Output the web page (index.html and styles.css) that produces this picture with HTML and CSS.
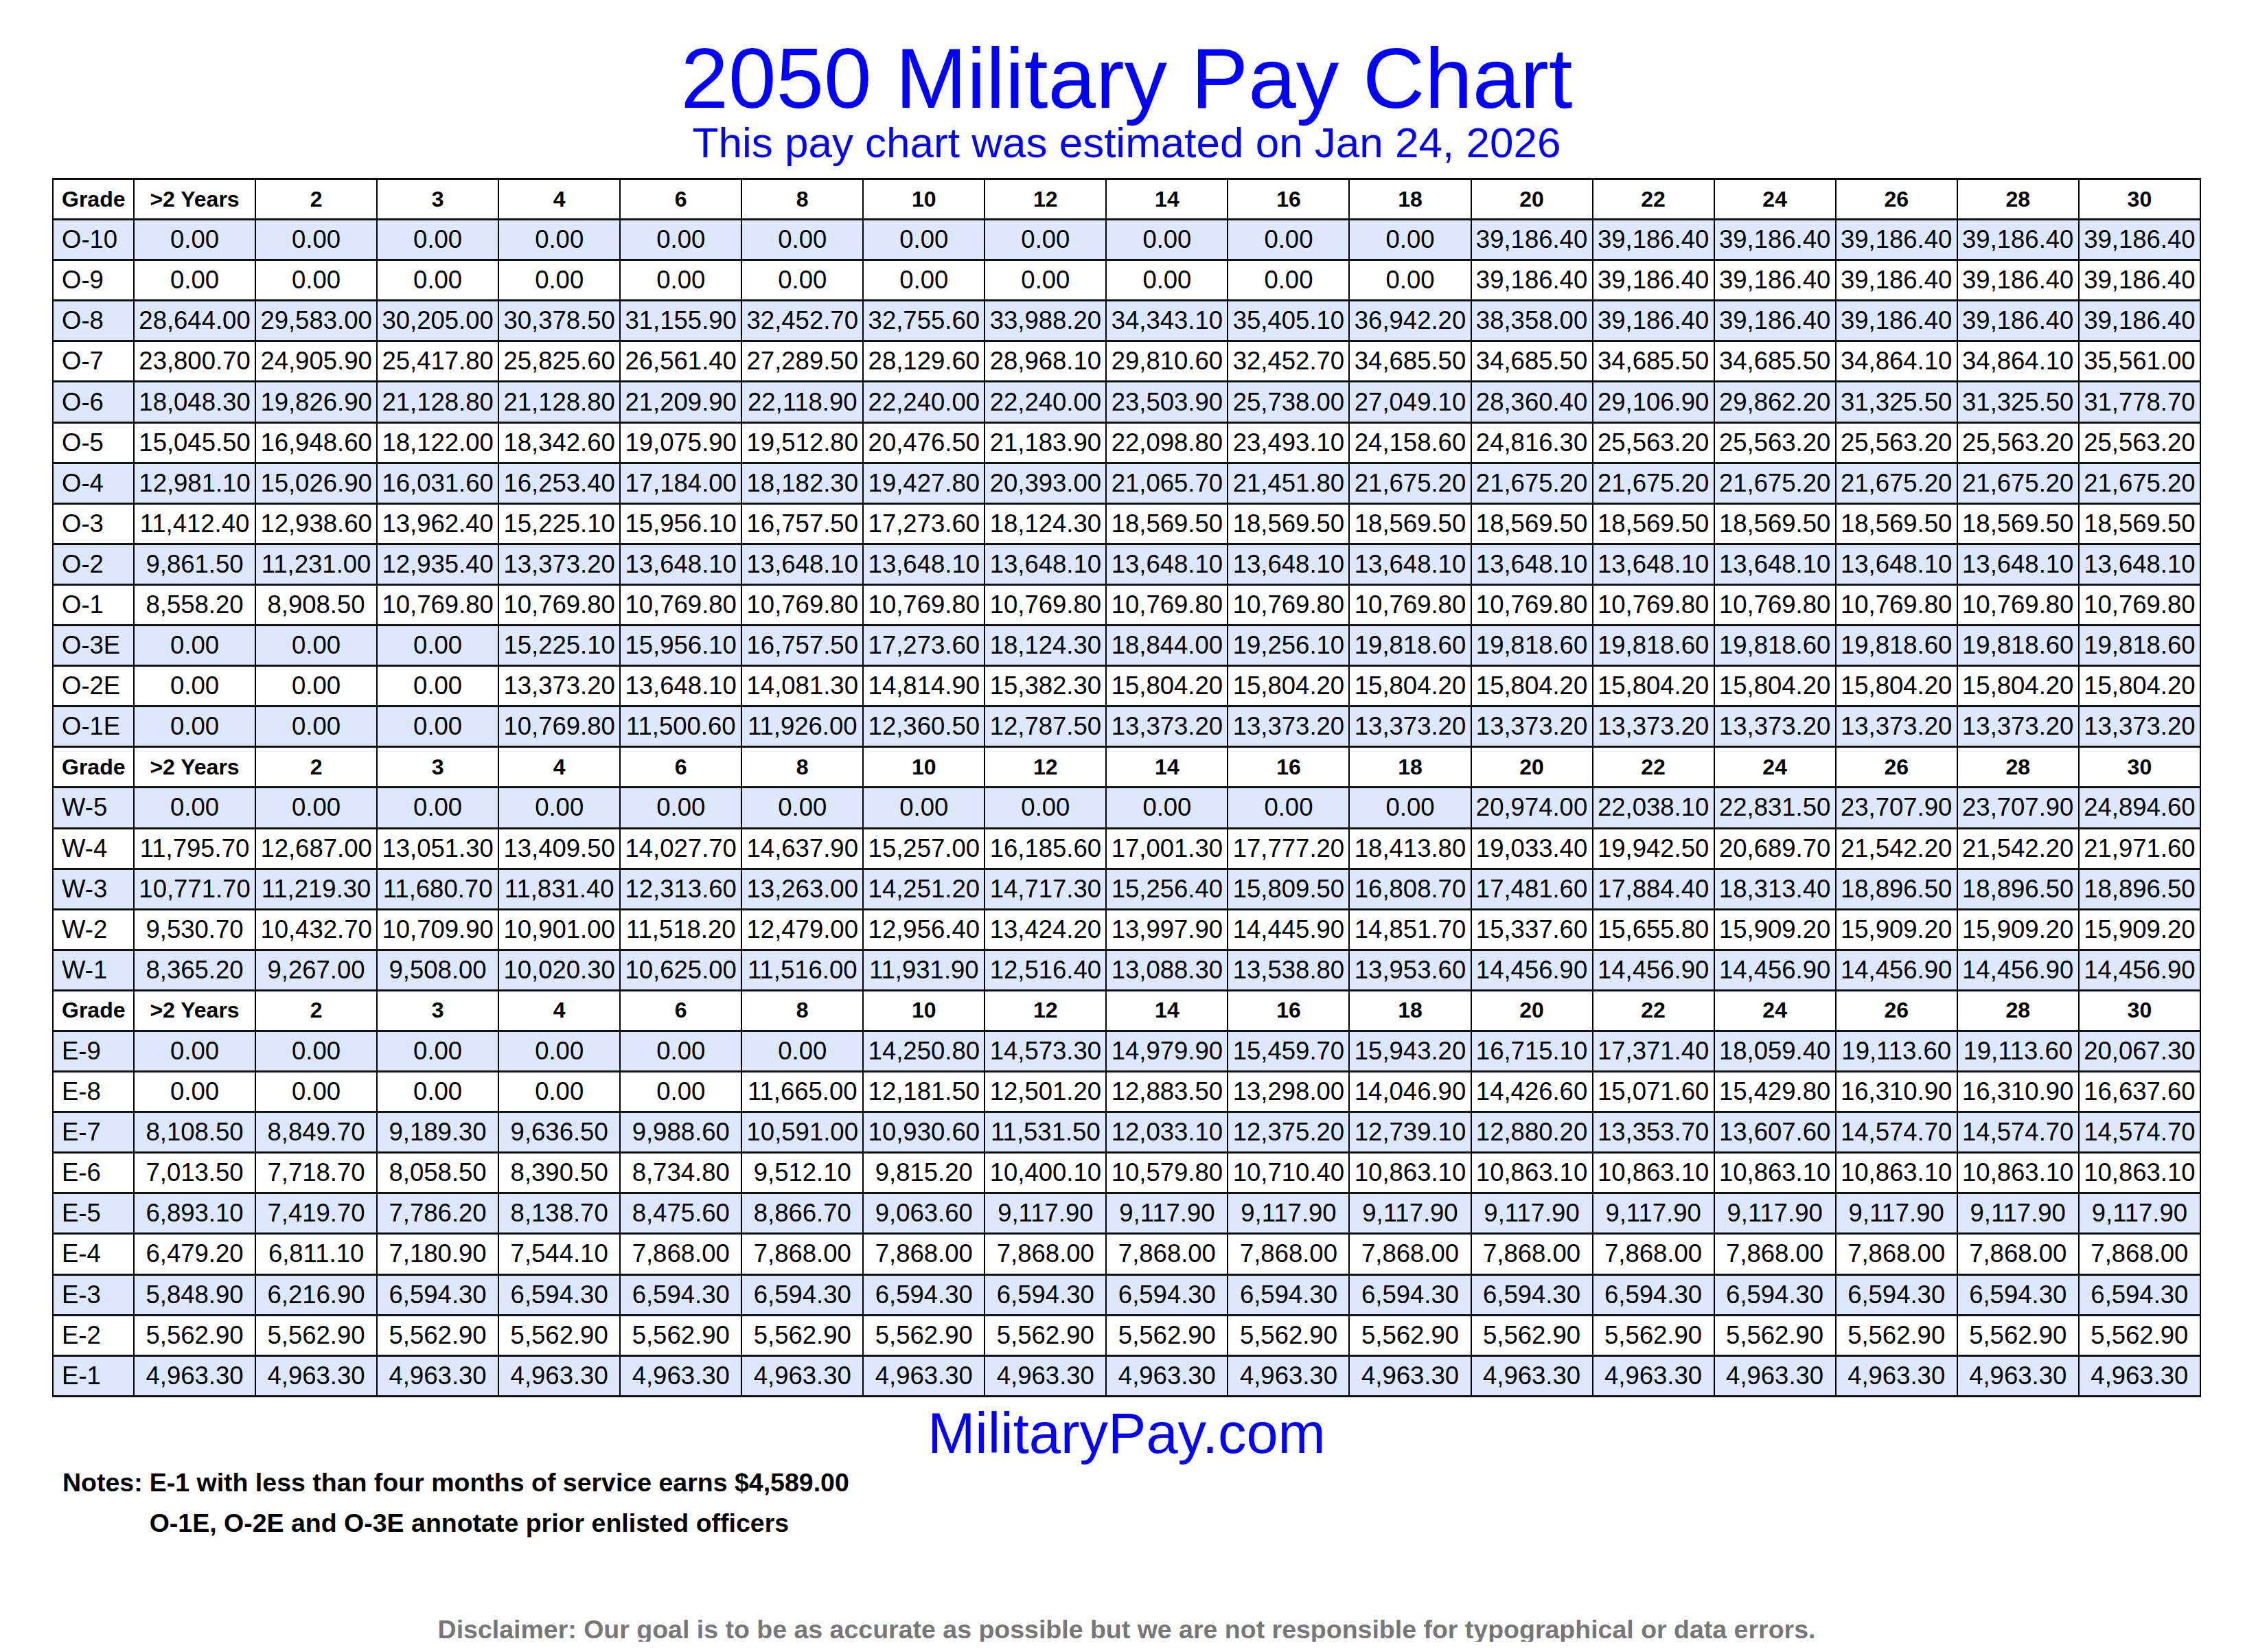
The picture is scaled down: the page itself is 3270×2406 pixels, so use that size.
FILE: index.html
```html
<!DOCTYPE html>
<html lang="en">
<head>
<meta charset="utf-8">
<title>2050 Military Pay Chart</title>
<link rel="stylesheet" href="styles.css">
</head>
<body>
<div class="page">
  <h1 class="title">2050 Military Pay Chart</h1>
  <p class="subtitle">This pay chart was estimated on Jan 24, 2026</p>
  <table class="pay">
    <colgroup><col class="c-grade"><col span="17"></colgroup>
    <tbody>
      <tr class="head"><th>Grade</th><th>&gt;2 Years</th><th>2</th><th>3</th><th>4</th><th>6</th><th>8</th><th>10</th><th>12</th><th>14</th><th>16</th><th>18</th><th>20</th><th>22</th><th>24</th><th>26</th><th>28</th><th>30</th></tr>
      <tr class="alt"><td>O-10</td><td>0.00</td><td>0.00</td><td>0.00</td><td>0.00</td><td>0.00</td><td>0.00</td><td>0.00</td><td>0.00</td><td>0.00</td><td>0.00</td><td>0.00</td><td>39,186.40</td><td>39,186.40</td><td>39,186.40</td><td>39,186.40</td><td>39,186.40</td><td>39,186.40</td></tr>
      <tr><td>O-9</td><td>0.00</td><td>0.00</td><td>0.00</td><td>0.00</td><td>0.00</td><td>0.00</td><td>0.00</td><td>0.00</td><td>0.00</td><td>0.00</td><td>0.00</td><td>39,186.40</td><td>39,186.40</td><td>39,186.40</td><td>39,186.40</td><td>39,186.40</td><td>39,186.40</td></tr>
      <tr class="alt"><td>O-8</td><td>28,644.00</td><td>29,583.00</td><td>30,205.00</td><td>30,378.50</td><td>31,155.90</td><td>32,452.70</td><td>32,755.60</td><td>33,988.20</td><td>34,343.10</td><td>35,405.10</td><td>36,942.20</td><td>38,358.00</td><td>39,186.40</td><td>39,186.40</td><td>39,186.40</td><td>39,186.40</td><td>39,186.40</td></tr>
      <tr><td>O-7</td><td>23,800.70</td><td>24,905.90</td><td>25,417.80</td><td>25,825.60</td><td>26,561.40</td><td>27,289.50</td><td>28,129.60</td><td>28,968.10</td><td>29,810.60</td><td>32,452.70</td><td>34,685.50</td><td>34,685.50</td><td>34,685.50</td><td>34,685.50</td><td>34,864.10</td><td>34,864.10</td><td>35,561.00</td></tr>
      <tr class="alt"><td>O-6</td><td>18,048.30</td><td>19,826.90</td><td>21,128.80</td><td>21,128.80</td><td>21,209.90</td><td>22,118.90</td><td>22,240.00</td><td>22,240.00</td><td>23,503.90</td><td>25,738.00</td><td>27,049.10</td><td>28,360.40</td><td>29,106.90</td><td>29,862.20</td><td>31,325.50</td><td>31,325.50</td><td>31,778.70</td></tr>
      <tr><td>O-5</td><td>15,045.50</td><td>16,948.60</td><td>18,122.00</td><td>18,342.60</td><td>19,075.90</td><td>19,512.80</td><td>20,476.50</td><td>21,183.90</td><td>22,098.80</td><td>23,493.10</td><td>24,158.60</td><td>24,816.30</td><td>25,563.20</td><td>25,563.20</td><td>25,563.20</td><td>25,563.20</td><td>25,563.20</td></tr>
      <tr class="alt"><td>O-4</td><td>12,981.10</td><td>15,026.90</td><td>16,031.60</td><td>16,253.40</td><td>17,184.00</td><td>18,182.30</td><td>19,427.80</td><td>20,393.00</td><td>21,065.70</td><td>21,451.80</td><td>21,675.20</td><td>21,675.20</td><td>21,675.20</td><td>21,675.20</td><td>21,675.20</td><td>21,675.20</td><td>21,675.20</td></tr>
      <tr><td>O-3</td><td>11,412.40</td><td>12,938.60</td><td>13,962.40</td><td>15,225.10</td><td>15,956.10</td><td>16,757.50</td><td>17,273.60</td><td>18,124.30</td><td>18,569.50</td><td>18,569.50</td><td>18,569.50</td><td>18,569.50</td><td>18,569.50</td><td>18,569.50</td><td>18,569.50</td><td>18,569.50</td><td>18,569.50</td></tr>
      <tr class="alt"><td>O-2</td><td>9,861.50</td><td>11,231.00</td><td>12,935.40</td><td>13,373.20</td><td>13,648.10</td><td>13,648.10</td><td>13,648.10</td><td>13,648.10</td><td>13,648.10</td><td>13,648.10</td><td>13,648.10</td><td>13,648.10</td><td>13,648.10</td><td>13,648.10</td><td>13,648.10</td><td>13,648.10</td><td>13,648.10</td></tr>
      <tr><td>O-1</td><td>8,558.20</td><td>8,908.50</td><td>10,769.80</td><td>10,769.80</td><td>10,769.80</td><td>10,769.80</td><td>10,769.80</td><td>10,769.80</td><td>10,769.80</td><td>10,769.80</td><td>10,769.80</td><td>10,769.80</td><td>10,769.80</td><td>10,769.80</td><td>10,769.80</td><td>10,769.80</td><td>10,769.80</td></tr>
      <tr class="alt"><td>O-3E</td><td>0.00</td><td>0.00</td><td>0.00</td><td>15,225.10</td><td>15,956.10</td><td>16,757.50</td><td>17,273.60</td><td>18,124.30</td><td>18,844.00</td><td>19,256.10</td><td>19,818.60</td><td>19,818.60</td><td>19,818.60</td><td>19,818.60</td><td>19,818.60</td><td>19,818.60</td><td>19,818.60</td></tr>
      <tr><td>O-2E</td><td>0.00</td><td>0.00</td><td>0.00</td><td>13,373.20</td><td>13,648.10</td><td>14,081.30</td><td>14,814.90</td><td>15,382.30</td><td>15,804.20</td><td>15,804.20</td><td>15,804.20</td><td>15,804.20</td><td>15,804.20</td><td>15,804.20</td><td>15,804.20</td><td>15,804.20</td><td>15,804.20</td></tr>
      <tr class="alt"><td>O-1E</td><td>0.00</td><td>0.00</td><td>0.00</td><td>10,769.80</td><td>11,500.60</td><td>11,926.00</td><td>12,360.50</td><td>12,787.50</td><td>13,373.20</td><td>13,373.20</td><td>13,373.20</td><td>13,373.20</td><td>13,373.20</td><td>13,373.20</td><td>13,373.20</td><td>13,373.20</td><td>13,373.20</td></tr>
      <tr class="head"><th>Grade</th><th>&gt;2 Years</th><th>2</th><th>3</th><th>4</th><th>6</th><th>8</th><th>10</th><th>12</th><th>14</th><th>16</th><th>18</th><th>20</th><th>22</th><th>24</th><th>26</th><th>28</th><th>30</th></tr>
      <tr class="alt"><td>W-5</td><td>0.00</td><td>0.00</td><td>0.00</td><td>0.00</td><td>0.00</td><td>0.00</td><td>0.00</td><td>0.00</td><td>0.00</td><td>0.00</td><td>0.00</td><td>20,974.00</td><td>22,038.10</td><td>22,831.50</td><td>23,707.90</td><td>23,707.90</td><td>24,894.60</td></tr>
      <tr><td>W-4</td><td>11,795.70</td><td>12,687.00</td><td>13,051.30</td><td>13,409.50</td><td>14,027.70</td><td>14,637.90</td><td>15,257.00</td><td>16,185.60</td><td>17,001.30</td><td>17,777.20</td><td>18,413.80</td><td>19,033.40</td><td>19,942.50</td><td>20,689.70</td><td>21,542.20</td><td>21,542.20</td><td>21,971.60</td></tr>
      <tr class="alt"><td>W-3</td><td>10,771.70</td><td>11,219.30</td><td>11,680.70</td><td>11,831.40</td><td>12,313.60</td><td>13,263.00</td><td>14,251.20</td><td>14,717.30</td><td>15,256.40</td><td>15,809.50</td><td>16,808.70</td><td>17,481.60</td><td>17,884.40</td><td>18,313.40</td><td>18,896.50</td><td>18,896.50</td><td>18,896.50</td></tr>
      <tr><td>W-2</td><td>9,530.70</td><td>10,432.70</td><td>10,709.90</td><td>10,901.00</td><td>11,518.20</td><td>12,479.00</td><td>12,956.40</td><td>13,424.20</td><td>13,997.90</td><td>14,445.90</td><td>14,851.70</td><td>15,337.60</td><td>15,655.80</td><td>15,909.20</td><td>15,909.20</td><td>15,909.20</td><td>15,909.20</td></tr>
      <tr class="alt"><td>W-1</td><td>8,365.20</td><td>9,267.00</td><td>9,508.00</td><td>10,020.30</td><td>10,625.00</td><td>11,516.00</td><td>11,931.90</td><td>12,516.40</td><td>13,088.30</td><td>13,538.80</td><td>13,953.60</td><td>14,456.90</td><td>14,456.90</td><td>14,456.90</td><td>14,456.90</td><td>14,456.90</td><td>14,456.90</td></tr>
      <tr class="head"><th>Grade</th><th>&gt;2 Years</th><th>2</th><th>3</th><th>4</th><th>6</th><th>8</th><th>10</th><th>12</th><th>14</th><th>16</th><th>18</th><th>20</th><th>22</th><th>24</th><th>26</th><th>28</th><th>30</th></tr>
      <tr class="alt"><td>E-9</td><td>0.00</td><td>0.00</td><td>0.00</td><td>0.00</td><td>0.00</td><td>0.00</td><td>14,250.80</td><td>14,573.30</td><td>14,979.90</td><td>15,459.70</td><td>15,943.20</td><td>16,715.10</td><td>17,371.40</td><td>18,059.40</td><td>19,113.60</td><td>19,113.60</td><td>20,067.30</td></tr>
      <tr><td>E-8</td><td>0.00</td><td>0.00</td><td>0.00</td><td>0.00</td><td>0.00</td><td>11,665.00</td><td>12,181.50</td><td>12,501.20</td><td>12,883.50</td><td>13,298.00</td><td>14,046.90</td><td>14,426.60</td><td>15,071.60</td><td>15,429.80</td><td>16,310.90</td><td>16,310.90</td><td>16,637.60</td></tr>
      <tr class="alt"><td>E-7</td><td>8,108.50</td><td>8,849.70</td><td>9,189.30</td><td>9,636.50</td><td>9,988.60</td><td>10,591.00</td><td>10,930.60</td><td>11,531.50</td><td>12,033.10</td><td>12,375.20</td><td>12,739.10</td><td>12,880.20</td><td>13,353.70</td><td>13,607.60</td><td>14,574.70</td><td>14,574.70</td><td>14,574.70</td></tr>
      <tr><td>E-6</td><td>7,013.50</td><td>7,718.70</td><td>8,058.50</td><td>8,390.50</td><td>8,734.80</td><td>9,512.10</td><td>9,815.20</td><td>10,400.10</td><td>10,579.80</td><td>10,710.40</td><td>10,863.10</td><td>10,863.10</td><td>10,863.10</td><td>10,863.10</td><td>10,863.10</td><td>10,863.10</td><td>10,863.10</td></tr>
      <tr class="alt"><td>E-5</td><td>6,893.10</td><td>7,419.70</td><td>7,786.20</td><td>8,138.70</td><td>8,475.60</td><td>8,866.70</td><td>9,063.60</td><td>9,117.90</td><td>9,117.90</td><td>9,117.90</td><td>9,117.90</td><td>9,117.90</td><td>9,117.90</td><td>9,117.90</td><td>9,117.90</td><td>9,117.90</td><td>9,117.90</td></tr>
      <tr><td>E-4</td><td>6,479.20</td><td>6,811.10</td><td>7,180.90</td><td>7,544.10</td><td>7,868.00</td><td>7,868.00</td><td>7,868.00</td><td>7,868.00</td><td>7,868.00</td><td>7,868.00</td><td>7,868.00</td><td>7,868.00</td><td>7,868.00</td><td>7,868.00</td><td>7,868.00</td><td>7,868.00</td><td>7,868.00</td></tr>
      <tr class="alt"><td>E-3</td><td>5,848.90</td><td>6,216.90</td><td>6,594.30</td><td>6,594.30</td><td>6,594.30</td><td>6,594.30</td><td>6,594.30</td><td>6,594.30</td><td>6,594.30</td><td>6,594.30</td><td>6,594.30</td><td>6,594.30</td><td>6,594.30</td><td>6,594.30</td><td>6,594.30</td><td>6,594.30</td><td>6,594.30</td></tr>
      <tr><td>E-2</td><td>5,562.90</td><td>5,562.90</td><td>5,562.90</td><td>5,562.90</td><td>5,562.90</td><td>5,562.90</td><td>5,562.90</td><td>5,562.90</td><td>5,562.90</td><td>5,562.90</td><td>5,562.90</td><td>5,562.90</td><td>5,562.90</td><td>5,562.90</td><td>5,562.90</td><td>5,562.90</td><td>5,562.90</td></tr>
      <tr class="alt"><td>E-1</td><td>4,963.30</td><td>4,963.30</td><td>4,963.30</td><td>4,963.30</td><td>4,963.30</td><td>4,963.30</td><td>4,963.30</td><td>4,963.30</td><td>4,963.30</td><td>4,963.30</td><td>4,963.30</td><td>4,963.30</td><td>4,963.30</td><td>4,963.30</td><td>4,963.30</td><td>4,963.30</td><td>4,963.30</td></tr>
    </tbody>
  </table>
  <p class="site">MilitaryPay.com</p>
  <div class="notes">
    <span class="notes-label">Notes:</span>
    <div class="notes-lines">
      <p>E-1 with less than four months of service earns $4,589.00</p>
      <p>O-1E, O-2E and O-3E annotate prior enlisted officers</p>
    </div>
  </div>
  <p class="disclaimer">Disclaimer: Our goal is to be as accurate as possible but we are not responsible for typographical or data errors.</p>
</div>
</body>
</html>
```
FILE: styles.css
```css
html, body {
  margin: 0;
  padding: 0;
  background: #ffffff;
}

body {
  font-family: "Liberation Sans", Arial, Helvetica, sans-serif;
  color: #000000;
}

.page {
  width: 3130px;
  margin-left: 76px;
  padding-top: 53px;
  display: flex;
  flex-direction: column;
}

.title {
  margin: 0;
  font-size: 125px;
  line-height: 121px;
  font-weight: normal;
  color: #0000ff;
  text-align: center;
}

.subtitle {
  margin: 3px 0 0;
  font-size: 62px;
  line-height: 62px;
  color: #0000ff;
  text-align: center;
}

.pay {
  margin-top: 20px;
  width: 3130px;
  table-layout: fixed;
  border-collapse: collapse;
}

.c-grade {
  width: 118px;
}

.pay th,
.pay td {
  height: 56.1px;
  padding: 0;
  border-left: 2px solid #000000;
  border-right: 2px solid #000000;
  border-top: 3px solid #111111;
  border-bottom: 3px solid #111111;
  text-align: center;
  vertical-align: middle;
  white-space: nowrap;
  overflow: hidden;
}

.pay td {
  font-size: 36.5px;
  font-weight: normal;
}

.pay th {
  font-size: 32px;
  font-weight: bold;
}

.pay th:first-child,
.pay td:first-child {
  text-align: left;
  padding-left: 12px;
}

.pay tr.alt td {
  background: #dde8fc;
}

.site {
  margin: 11px 0 0;
  font-size: 83px;
  line-height: 83px;
  color: #0000ff;
  text-align: center;
}

.notes {
  margin: 1px 0 0 15px;
  display: flex;
  gap: 10px;
  font-size: 37.5px;
  line-height: 59px;
  font-weight: bold;
}

.notes-lines p {
  margin: 0;
}

.disclaimer {
  margin: 107px 0 0;
  font-size: 37.5px;
  line-height: 36px;
  font-weight: bold;
  color: #777777;
  text-align: center;
}
```
